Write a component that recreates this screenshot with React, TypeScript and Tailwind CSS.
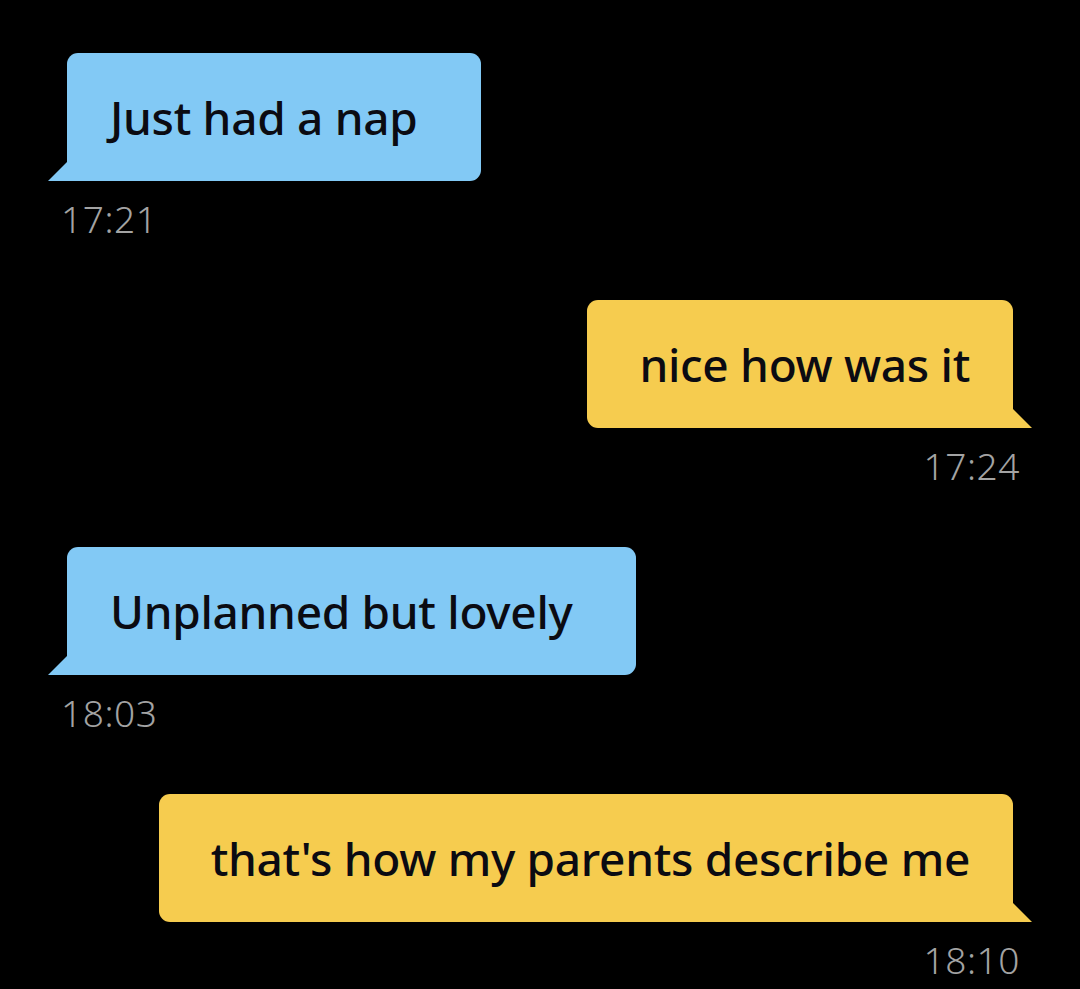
import React from 'react';

type Message = {
  id: number;
  text: string;
  time: string;
  mine: boolean;
};

const messages: Message[] = [
  { id: 1, text: 'Just had a nap', time: '17:21', mine: false },
  { id: 2, text: 'nice how was it', time: '17:24', mine: true },
  { id: 3, text: 'Unplanned but lovely', time: '18:03', mine: false },
  { id: 4, text: "that's how my parents describe me", time: '18:10', mine: true },
];

const Bubble: React.FC<{ msg: Message }> = ({ msg }) => {
  if (msg.mine) {
    return (
      <div className="flex flex-col items-end">
        <div className="relative mr-[19px] flex h-[128px] items-center rounded-[11px] rounded-br-none bg-[#f6cc4f] pl-[52px] pr-[43px] text-[46px] font-medium tracking-[-0.3px] text-[#0b0b12]">
          {msg.text}
          {/* tail */}
          <svg className="absolute -right-[19px] bottom-0" width="19" height="19" viewBox="0 0 19 19">
            <polygon points="0,0 19,19 0,19" fill="#f6cc4f" />
          </svg>
        </div>
        <div className="mt-[17px] pr-[12px] text-[37px] font-light leading-[42px] tracking-[0.6px] text-[#a3a3a3]">{msg.time}</div>
      </div>
    );
  }
  return (
    <div className="flex flex-col items-start">
      <div className="relative ml-[19px] flex h-[128px] items-center rounded-[11px] rounded-bl-none bg-[#82c9f5] pl-[43px] pr-[63px] text-[46px] font-medium tracking-[-0.3px] text-[#0b0b12]">
        {msg.text}
        <svg className="absolute -left-[19px] bottom-0" width="19" height="19" viewBox="0 0 19 19">
          <polygon points="19,0 19,19 0,19" fill="#82c9f5" />
        </svg>
      </div>
      <div className="mt-[17px] pl-[13px] text-[37px] font-light leading-[42px] tracking-[0.6px] text-[#a3a3a3]">{msg.time}</div>
    </div>
  );
};

export default function App() {
  return (
    <div
      className="flex min-h-[989px] w-[1080px] flex-col gap-[60px] bg-black px-[48px] pt-[53px]"
      style={{ fontFamily: '"Noto Sans", "Open Sans", sans-serif' }}
    >
      {messages.map((m) => (
        <Bubble key={m.id} msg={m} />
      ))}
    </div>
  );
}
